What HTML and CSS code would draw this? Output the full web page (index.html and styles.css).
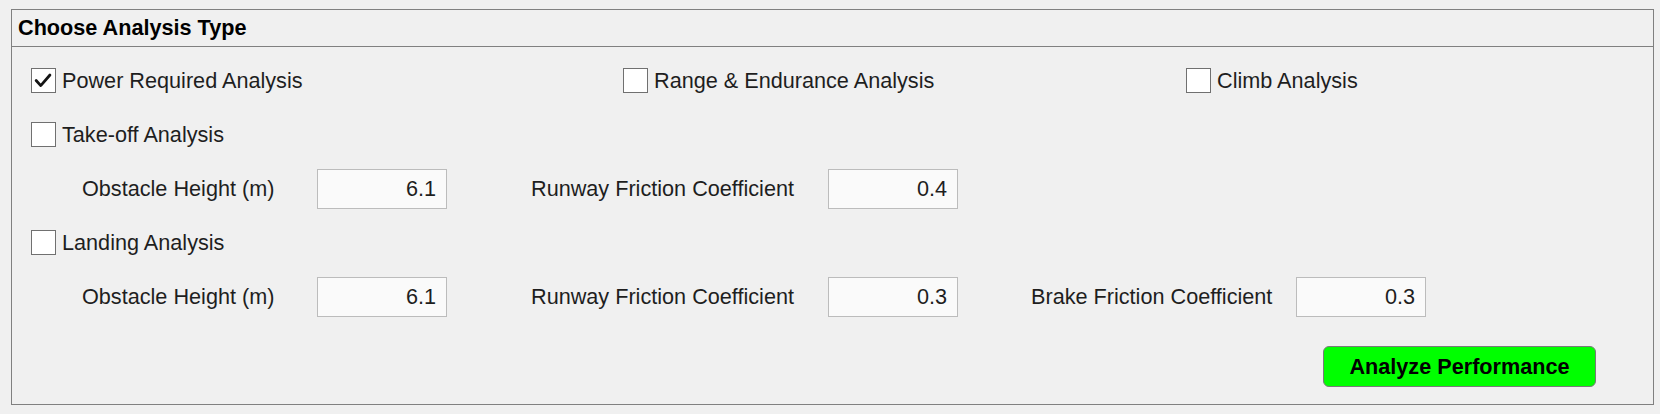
FILE: index.html
```html
<!DOCTYPE html>
<html>
<head>
<meta charset="utf-8">
<title>Choose Analysis Type</title>
<link rel="stylesheet" href="styles.css">
</head>
<body>
<div class="panel">
  <div class="panel-title">Choose Analysis Type</div>
  <div class="panel-body">
    <div class="check-row three">
      <label class="check"><span class="box"><svg viewBox="0 0 25 25" width="23" height="23"><polyline points="4.5,12.5 9.5,18 19.5,6.5" fill="none" stroke="#141414" stroke-width="3" stroke-linecap="round" stroke-linejoin="round"/></svg></span><span class="text">Power Required Analysis</span></label>
      <label class="check"><span class="box"></span><span class="text">Range &amp; Endurance Analysis</span></label>
      <label class="check"><span class="box"></span><span class="text">Climb Analysis</span></label>
    </div>

    <div class="check-row gap-a">
      <label class="check"><span class="box"></span><span class="text">Take-off Analysis</span></label>
    </div>

    <div class="field-row gap-b">
      <span class="flabel w1">Obstacle Height (m)</span>
      <span class="input">6.1</span>
      <span class="flabel w2">Runway Friction Coefficient</span>
      <span class="input">0.4</span>
    </div>

    <div class="check-row gap-c">
      <label class="check"><span class="box"></span><span class="text">Landing Analysis</span></label>
    </div>

    <div class="field-row gap-b">
      <span class="flabel w1">Obstacle Height (m)</span>
      <span class="input">6.1</span>
      <span class="flabel w2">Runway Friction Coefficient</span>
      <span class="input">0.3</span>
      <span class="flabel w3">Brake Friction Coefficient</span>
      <span class="input">0.3</span>
    </div>

    <div class="button-row">
      <button class="analyze">Analyze Performance</button>
    </div>
  </div>
</div>
</body>
</html>
```

FILE: styles.css
```css
html, body {
  margin: 0;
  padding: 0;
  background: #f0f0f0;
}
body {
  font-family: "Liberation Sans", Arial, Helvetica, sans-serif;
  font-size: 21.65px;
  color: #1e1e1e;
  padding: 9px 0 0 11px;
}
.panel {
  box-sizing: border-box;
  width: 1643px;
  height: 396px;
  border: 1px solid #808080;
  background: #f0f0f0;
}
.panel-title {
  box-sizing: border-box;
  height: 37px;
  border-bottom: 1px solid #808080;
  padding-left: 6px;
  font-weight: bold;
  line-height: 36px;
  color: #000;
}
.panel-body {
  padding-top: 21px;
}
.check-row {
  display: flex;
  height: 25px;
  padding-left: 19px;
}
.check-row.three {
  display: grid;
  grid-template-columns: 592px 563px auto;
}
.gap-a { margin-top: 29px; }
.gap-b { margin-top: 22px; }
.gap-c { margin-top: 21px; }
.check {
  display: flex;
  align-items: center;
  height: 25px;
}
.box {
  box-sizing: border-box;
  width: 25px;
  height: 25px;
  border: 1px solid #707070;
  background: #ffffff;
  display: flex;
  align-items: center;
  justify-content: center;
  flex: none;
}
.box svg {
  display: block;
}
.text {
  margin-left: 6px;
  line-height: 25px;
  white-space: nowrap;
}
.field-row {
  display: flex;
  align-items: center;
  height: 40px;
  padding-left: 70px;
}
.flabel {
  white-space: nowrap;
  flex: none;
}
.w1 { width: 235px; }
.w2 { width: 297px; margin-left: 84px; }
.w3 { width: 265px; margin-left: 73px; }
.input {
  box-sizing: border-box;
  width: 130px;
  height: 40px;
  border: 1px solid #bcbcbc;
  background: #fafafa;
  text-align: right;
  padding-right: 10px;
  line-height: 38px;
  flex: none;
}
.button-row {
  display: flex;
  justify-content: flex-end;
  padding-right: 57px;
  margin-top: 29px;
}
.analyze {
  box-sizing: border-box;
  width: 273px;
  height: 41px;
  border: 1px solid #7a7a7a;
  border-radius: 6px;
  background: #00ff00;
  font-family: "Liberation Sans", Arial, Helvetica, sans-serif;
  font-size: 21.65px;
  font-weight: bold;
  color: #000;
  padding: 0;
}
```
